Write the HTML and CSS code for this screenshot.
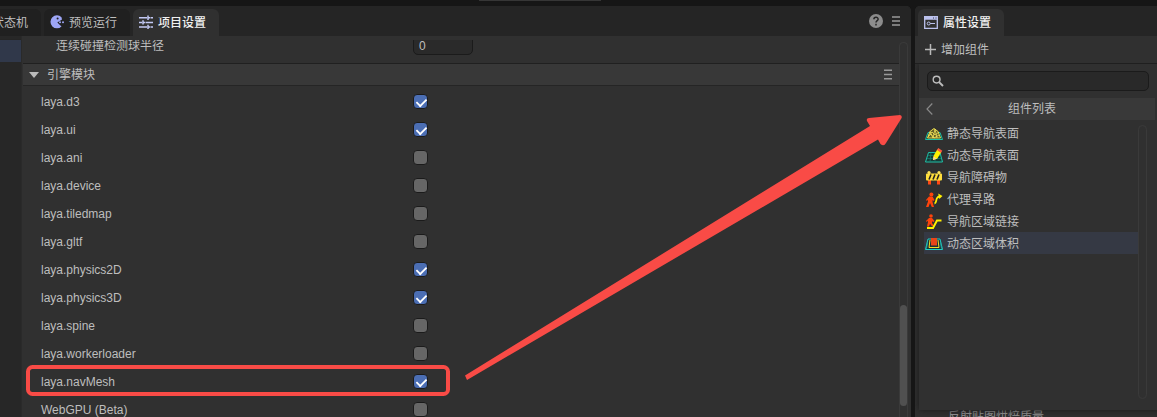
FILE: index.html
```html
<!DOCTYPE html>
<html lang="zh-CN">
<head>
<meta charset="utf-8">
<title>项目设置</title>
<link rel="stylesheet" href="styles.css">
</head>
<body>
<div class="topbar"><i></i></div>
<div class="workspace">
  <section class="panel main">
    <header class="tabs">
      <div class="tab cut"><span>状态机</span></div>
      <div class="tab"><svg width="16" height="16" viewBox="0 0 16 16"><path d="M12.5 3.2A6.5 6.5 0 1 0 12.5 12.5L8.3 8.4 13 5.4Z" fill="#9da5f5"/><circle cx="8.6" cy="4.5" r="1" fill="#202020"/><circle cx="11" cy="8.3" r="1" fill="#9da5f5"/><circle cx="14" cy="8.3" r="1" fill="#9da5f5"/></svg><span>预览运行</span></div>
      <div class="tab active"><svg width="16" height="16" viewBox="0 0 16 16" fill="none" stroke="#c3c9f5" stroke-width="1.5"><path d="M1 3.7H9M13 3.7H15M1 8.4H4M8 8.4H15M1 13H9M13 13H15M10 1.5V6M12.5 3.7H10M5 6.2V10.6M7.5 8.4H5M10 10.8V15M12.5 13H10"/></svg><span>项目设置</span></div>
      <div class="tools"><svg width="14" height="14" viewBox="0 0 14 14"><circle cx="7" cy="7" r="7" fill="#8c8c8c"/><path d="M4.9 5.3C4.9 2.6 9.2 2.7 9.1 5.2C9.1 6.7 7 6.7 7 8.6M7 9.8V11.4" fill="none" stroke="#252525" stroke-width="1.5"/></svg><svg width="8" height="10" viewBox="0 0 8 10"><path d="M0 1H8M0 5H8M0 9H8" stroke="#999" stroke-width="1.4"/></svg></div>
    </header>
    <div class="columns">
      <aside><div class="selected"></div></aside>
      <div class="settings">
        <div class="clipped"><span>连续碰撞检测球半径</span><div class="number">0</div></div>
        <div class="section"><svg width="10" height="6" viewBox="0 0 10 6"><path d="M0 0H10L5 6Z" fill="#bbb"/></svg><span>引擎模块</span><svg class="menu" width="8" height="11" viewBox="0 0 8 11"><path d="M0 1.2H8M0 5.5H8M0 9.8H8" stroke="#999" stroke-width="1.4"/></svg></div>
        <div class="modules">
          <div class="row"><span>laya.d3</span><b class="check on"></b></div>
          <div class="row"><span>laya.ui</span><b class="check on"></b></div>
          <div class="row"><span>laya.ani</span><b class="check"></b></div>
          <div class="row"><span>laya.device</span><b class="check"></b></div>
          <div class="row"><span>laya.tiledmap</span><b class="check"></b></div>
          <div class="row"><span>laya.gltf</span><b class="check"></b></div>
          <div class="row"><span>laya.physics2D</span><b class="check on"></b></div>
          <div class="row"><span>laya.physics3D</span><b class="check on"></b></div>
          <div class="row"><span>laya.spine</span><b class="check"></b></div>
          <div class="row"><span>laya.workerloader</span><b class="check"></b></div>
          <div class="row"><span>laya.navMesh</span><b class="check on"></b></div>
          <div class="row"><span>WebGPU (Beta)</span><b class="check"></b></div>
        </div>
      </div>
      <div class="scroll"><i></i></div>
    </div>
  </section>
  <section class="panel props">
    <header class="tabs">
      <div class="tab active"><svg width="14" height="13" viewBox="0 0 14 13" fill="none"><path d="M.7 1V12.3H13.3V1Z" stroke="#bcc2ee" stroke-width="1.3"/><path d="M0 0H14V3.7H0Z" fill="#bcc2ee"/><path d="M9 2H10M11.5 2H12.5" stroke="#34364a"/><circle cx="4.7" cy="7.5" r="1.5" stroke="#bcc2ee"/><path d="M6.2 7.5H11" stroke="#bcc2ee" stroke-width="1.2"/></svg><span>属性设置</span></div>
    </header>
    <div class="add"><svg width="11" height="11" viewBox="0 0 11 11"><path d="M5.5 0V11M0 5.5H11" stroke="#b9b9b9" stroke-width="1.5"/></svg><span>增加组件</span></div>
    <div class="body">
      <div class="popup">
        <div class="search"><svg width="12" height="12" viewBox="0 0 12 12" fill="none" stroke="#bcbcbc"><circle cx="4.6" cy="4.6" r="3.4" stroke-width="1.4"/><path d="M7.1 7.1L11 11" stroke-width="2"/></svg></div>
        <div class="title"><svg width="7" height="12" viewBox="0 0 7 12"><path d="M6.3 .5L1 6L6.3 11.5" fill="none" stroke="#888" stroke-width="1.2"/></svg><span>组件列表</span></div>
        <div class="listing">
          <div class="items">
            <div class="item"><svg width="18" height="16" viewBox="0 0 18 16" fill="none"><path d="M3 6.5H15L17.5 13.5H.5Z" fill="#173b37" stroke="#20bda5"/><path d="M2.5 12L5 5.5L9 2.5L13 5.5L15.5 12Z" fill="#625e26" stroke="#e9dc4d"/><path d="M3.5 9L7 6L10 9L14 6M5 5.5L8 12L10 3L12 12M3 11L6 8L9 12L14 9" stroke="#f4e45b" stroke-width=".8"/></svg>静态导航表面</div>
            <div class="item"><svg width="18" height="16" viewBox="0 0 18 16" fill="none"><path d="M3.5 4.5H15L17.5 14H.5Z" fill="#173b37" stroke="#20c0a7"/><path d="M2.5 7.5H15M2 10.5H16M6 4.5L5 14M10 4.5V14" stroke="#178371" stroke-width=".7"/><path d="M8.5 8L12.2 1.6L16.2 4.2L12.2 10.8L8 12Z" fill="#fff000"/><path d="M12 2L13.3 0L17.3 2.7L16 4.8Z" fill="#ff5b3d"/><path d="M8.5 8.5L12 10.8L8 12Z" fill="#ffd59d"/></svg>动态导航表面</div>
            <div class="item"><svg width="18" height="16" viewBox="0 0 18 16"><path d="M3 9H6V14.5H3ZM12 9H15V14.5H12Z" fill="#ff4815"/><rect x="1" y="3.5" width="16" height="7" rx="1" fill="#ffdf3c"/><path d="M4 9.5L6 4.5M8 9.5L10 4.5M12 9.5L14 4.5" stroke="#292622" stroke-width="1.6"/><circle cx="4" cy="2.5" r="1.6" fill="#ffe45a"/><circle cx="14" cy="2.5" r="1.6" fill="#ffe45a"/></svg>导航障碍物</div>
            <div class="item"><svg width="18" height="16" viewBox="0 0 18 16" fill="none"><circle cx="6.4" cy="2.4" r="2" fill="#ff430b"/><path d="M4 4.5H7.5L9.5 8L8.5 9L7.5 8V10L9 15H6.8L5 11L3.5 15H1L3 9.5V7.5L2 9L1 8Z" fill="#ff430b"/><path d="M9.5 11.5C12 11 10.5 7 12.5 5.5C13.5 4.5 14 4.5 15 4.5" stroke="#fff000" stroke-width="1.8"/><path d="M13.2 1.5L17.5 4L14.3 7Z" fill="#fff000"/></svg>代理寻路</div>
            <div class="item"><svg width="18" height="16" viewBox="0 0 18 16" fill="none"><circle cx="6" cy="2" r="1.8" fill="#ff430b"/><path d="M4 4H7L9.5 7L8.5 8L7 7.2V9L9 12H6.8L5 9.7L4 12.5H2L3 8V6.5L1.8 8L1 7Z" fill="#ff430b"/><path d="M2 14H8L12 6.5H16.5" stroke="#fff000" stroke-width="2"/></svg>导航区域链接</div>
            <div class="item chosen"><svg width="18" height="16" viewBox="0 0 18 16" fill="none"><path d="M3 3H15L17.5 13.5H.5Z" fill="#1b3136" stroke="#20d0c4"/><path d="M5 4L4 11.5H14L13 4" stroke="#f0df28"/><path d="M2.5 6L1.5 12.5M15.5 6L16.5 12.5" stroke="#20a9a3"/><rect x="6" y="2" width="6" height="7.5" fill="#e84518"/></svg>动态区域体积</div>
          </div>
          <div class="list-scroll"></div>
        </div>
      </div>
      <div class="below">反射贴图烘焙质量</div>
    </div>
  </section>
</div>
<svg class="annotation" width="1157" height="417" viewBox="0 0 1157 417"><rect x="28" y="367" width="420" height="27" rx="4.5" fill="none" stroke="#f94b46" stroke-width="4"/><path d="M465 375.5L870 126L867 121Q866 118 869 118L900 115Q903 116 901 119L886 143Q884 147 880.5 144L878 139.5L467 380Z" fill="#f94b46"/></svg>
</body>
</html>
```
FILE: styles.css
```css
* { box-sizing: border-box; }
body {
  margin: 0;
  width: 1157px;
  height: 417px;
  overflow: hidden;
  background: #161616;
  color: #bebebe;
  font: 12px/16px "Liberation Sans", "Noto Sans CJK SC", sans-serif;
}
svg { display: block; flex: none; }
.topbar { height: 6px; padding-left: 479px; }
.topbar i { display: block; width: 122px; height: 1px; background: #363636; }
.workspace { display: flex; gap: 4px; height: 411px; }
.panel { display: flex; flex-direction: column; background: #303030; overflow: hidden; }
.main { width: 911px; border-top-right-radius: 5px; }
.props { width: 242px; border-top-left-radius: 5px; }
.tabs { display: flex; gap: 3px; flex: none; height: 30px; padding-top: 3px; background: #252525; }
.tab {
  display: flex;
  align-items: center;
  gap: 4px;
  width: 86px;
  padding: 0 0 1px 5px;
  border-radius: 6px 6px 0 0;
  background: #202020;
  white-space: nowrap;
}
.tab span { padding-top: 2px; }
.tab.cut { width: 41px; justify-content: flex-end; padding-right: 13px; overflow: hidden; border-top-left-radius: 0; }
.tab.active { background: #303030; color: #f0f0f0; font-weight: 500; }
.tools { display: flex; align-items: center; gap: 9px; margin-left: auto; padding: 0 11px 3px 0; }
.columns { display: flex; height: 381px; }
aside { width: 22px; padding-top: 3px; background: #272727; border-right: 1px solid #2a2a2a; }
.selected { height: 23px; background: #30384a; border-top: 1px solid #252525; }
.settings { width: 877px; padding-top: 4px; }
.clipped { display: flex; height: 23px; padding-left: 34px; overflow: hidden; }
.clipped span { width: 357px; margin-top: -2px; }
.number {
  width: 60px;
  height: 20px;
  margin-top: -5px;
  padding: 2px 5px;
  border: 1px solid #1b1b1b;
  border-radius: 5px;
  background: #2a2a2a;
}
.section {
  display: flex;
  align-items: center;
  gap: 8px;
  height: 23px;
  margin-left: 1px;
  padding: 0 7px 0 6px;
  border-top: 1px solid #202020;
  border-bottom: 1px solid #252525;
  background: #383838;
}
.menu { margin-left: auto; }
.modules { padding-top: 1px; }
.row { display: flex; align-items: center; height: 28px; padding-left: 19px; }
.row span { width: 372px; padding-top: 2px; }
.check { display: block; width: 15px; height: 15px; border: 1px solid #1b1b1b; border-radius: 4px; background: #666; }
.check.on { background: #4b6eb4; }
.check.on::after {
  content: "";
  display: block;
  width: 9px;
  height: 5px;
  margin: 3px 0 0 2px;
  border: solid #fff;
  border-width: 0 0 2px 2px;
  transform: rotate(-45deg) scale(.9);
}
.scroll { width: 9px; margin-top: 6px; padding: 262px 0 0; border: 1px solid #3a3a3a; border-radius: 5px 5px 0 0; border-bottom: 0; }
.scroll i { display: block; height: 101px; border-radius: 4px; background: #505050; }
.props .tabs { padding-left: 3px; }
.props .tab { padding-left: 6px; gap: 5px; }
.add { display: flex; align-items: center; gap: 5px; flex: none; height: 28px; padding-left: 10px; border-bottom: 1px solid #1f1f1f; }
.body { flex: 1; padding-left: 4px; }
.popup { width: 244px; height: 346px; padding-top: 7px; background: #303030; box-shadow: 0 0 7px #191919; clip-path: inset(0 0 -7px -4px); }
.search { display: flex; align-items: center; width: 222px; height: 20px; margin-left: 8px; padding-left: 4px; border: 1px solid #1b1b1b; border-radius: 5px; background: #292929; }
.title { display: flex; align-items: center; width: 236px; height: 22px; margin-top: 7px; padding-left: 7px; background: #393939; }
.title span { flex: 1; padding-right: 24px; text-align: center; }
.listing { display: flex; padding: 2px 0 0 5px; }
.items { width: 214px; }
.item { display: flex; align-items: center; gap: 4px; height: 22px; padding: 2px 0 0 1px; }
.chosen { background: #353944; }
.list-scroll { width: 9px; height: 274px; margin-top: 3px; border: 1px solid #3a3a3a; border-radius: 5px; }
.below { height: 7px; margin-left: 29px; overflow: hidden; line-height: 14px; color: #999; }
.annotation { position: absolute; left: 0; top: 0; pointer-events: none; }
```
